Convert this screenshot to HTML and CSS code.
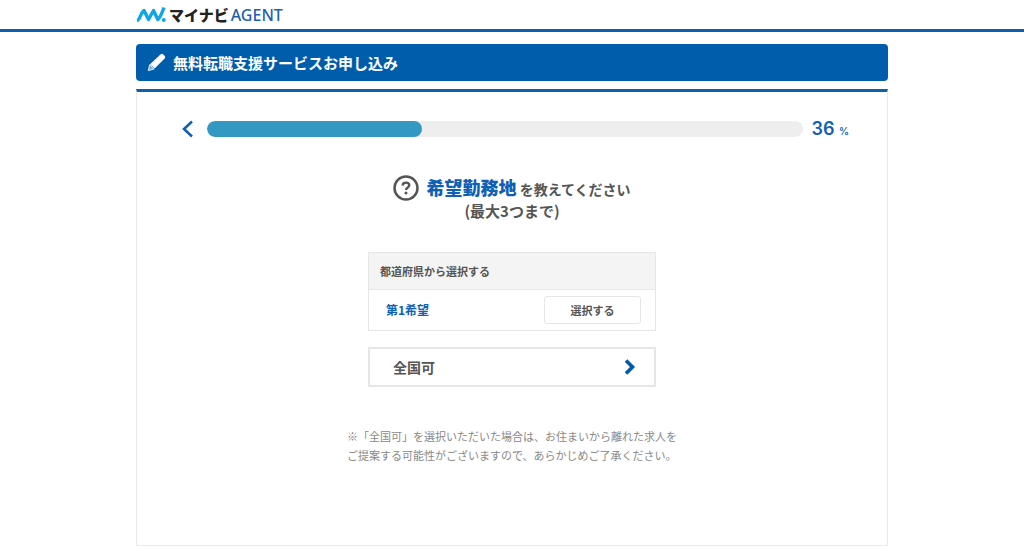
FILE: index.html
```html
<!DOCTYPE html>
<html lang="ja">
<head>
<meta charset="utf-8">
<meta name="viewport" content="width=device-width, initial-scale=1">
<title>無料転職支援サービスお申し込み</title>
<link rel="stylesheet" href="styles.css">
</head>
<body>
<header class="site-header">
  <div class="container">
    <a class="logo" href="#">
      <svg class="logo-mark" width="31" height="18" viewBox="0 0 31 18" aria-hidden="true">
        <path d="M1 14.500C4 14 5 6 8 4.500L12.500 13.500L17.500 4.500L21.800 13.500C24 12 26 7 28 1.500" fill="none" stroke="#0fa6e9" stroke-width="3.400" stroke-linejoin="round"/>
        <circle cx="27.800" cy="14" r="2" fill="#0fa6e9"/>
      </svg>
      <span class="logo-name">マイナビ</span>
      <span class="logo-sub">AGENT</span>
    </a>
  </div>
</header>
<main class="container">
  <h1 class="page-title">
    <svg width="19" height="19" viewBox="0 0 19 19" aria-hidden="true">
      <path d="M13.500 1.400Q14.800 .2 16 1.200L17.800 3Q18.700 4.200 17.600 5.400L7.600 15.600L3 11.200Z" fill="#fff"/>
      <path d="M2.700 11.700L1.300 17.600L7.100 16Z" fill="#7fadd5" stroke="#e6eff8" stroke-width="1" stroke-linejoin="round"/>
    </svg>
    <span>無料転職支援サービスお申し込み</span>
  </h1>
  <section class="panel">
    <div class="progress">
      <button class="back" type="button" aria-label="戻る">
        <svg width="12" height="18" viewBox="0 0 12 18" aria-hidden="true"><path d="M10 1.500L2 9L10 16.500" fill="none" stroke="#0d60b5" stroke-width="2.500"/></svg>
      </button>
      <div class="track" role="progressbar" aria-label="進捗" aria-valuenow="36" aria-valuemin="0" aria-valuemax="100"><div class="fill" style="width:36%"></div></div>
      <div class="percent">36 <small>%</small></div>
    </div>
    <h2 class="question">
      <span class="question-line">
        <svg width="26" height="26" viewBox="0 0 26 26" aria-hidden="true">
          <circle cx="13" cy="13" r="11.500" fill="none" stroke="#555" stroke-width="2.500"/>
          <path d="M9.700 10.500C9.700 6.700 16.300 6.700 16.300 10.300C16.300 12.500 13 12.400 13 15" fill="none" stroke="#555" stroke-width="2.400"/>
          <circle cx="13" cy="17.900" r="1.500" fill="#555"/>
        </svg>
        <span class="question-text"><strong>希望勤務地</strong> を教えてください</span>
      </span>
      <span class="question-note">(最大3つまで)</span>
    </h2>
    <div class="choices">
      <div class="card">
        <h3 class="card-head">都道府県から選択する</h3>
        <div class="card-row">
          <span class="rank" id="rank1">第1希望</span>
          <button class="select-btn" type="button" aria-describedby="rank1">選択する</button>
        </div>
      </div>
      <button class="anywhere" type="button">
        <span>全国可</span>
        <svg width="12" height="16" viewBox="0 0 12 16" aria-hidden="true"><path d="M2 1.500L8.500 8L2 14.500" fill="none" stroke="#005bac" stroke-width="3.600"/></svg>
      </button>
    </div>
    <p class="notice">※「全国可」を選択いただいた場合は、お住まいから離れた求人を<br>ご提案する可能性がございますので、あらかじめご了承ください。</p>
  </section>
</main>
</body>
</html>
```
FILE: styles.css
```css
* { box-sizing: border-box; }
body {
  margin: 0;
  background: #fff;
  color: #555;
  font-family: "Noto Sans CJK JP", sans-serif;
}
h1, h2, h3, p { margin: 0; }
button { font-family: inherit; color: inherit; cursor: pointer; }
svg { display: block; flex: none; }
.container { width: 100%; max-width: 752px; margin: 0 auto; }
.site-header { border-bottom: 3px solid #0d60ad; padding: 4px 0; }
.logo {
  display: flex;
  width: fit-content;
  align-items: center;
  gap: 2px;
  height: 21px;
  text-decoration: none;
  white-space: nowrap;
}
.logo-name { font: 900 15px/20px "Noto Sans CJK JP", sans-serif; color: #222; }
.logo-sub { font: 500 16px/20px "Noto Sans", sans-serif; color: #1d5fb0; }
.page-title {
  display: flex;
  align-items: center;
  gap: 7px;
  margin-top: 12px;
  padding: 8px 11px;
  border-radius: 4px;
  background: #005dac;
  color: #fff;
  font-size: 15px;
  line-height: 21px;
}
.panel {
  min-height: 457px;
  margin: 8px 0 4px;
  padding: 25px 38px;
  border: 1px solid #e9e9e9;
  border-top: 3px solid #0d60ad;
}
.progress { display: flex; align-items: center; gap: 8px; }
.back { padding: 0 5px 0 7px; border: 0; background: none; }
.track { flex: 1; height: 16px; border-radius: 8px; background: #eee; overflow: hidden; }
.fill { height: 100%; border-radius: 8px; background: #3499c2; }
.percent { padding: 2px 0; color: #0d60b5; font: 600 18px/20px Inter, sans-serif; white-space: nowrap; }
.percent small { font-size: 10px; line-height: 1; }
.question { margin-top: 34px; text-align: center; font-size: 14px; line-height: 24px; }
.question-line { display: flex; align-items: center; justify-content: center; gap: 7px; }
.question-text strong { color: #0d60b5; font-size: 18px; }
.question-note { display: block; font-size: 15px; line-height: 20px; }
.choices { width: 288px; margin: 31px auto 0; }
.card { border: 1px solid #e6e6e6; }
.card-head {
  padding: 8px 11px;
  border-bottom: 1px solid #e6e6e6;
  background: #f4f4f4;
  font-size: 11px;
  line-height: 20px;
}
.card-row { display: flex; align-items: center; justify-content: space-between; padding: 6px 14px 6px 17px; }
.rank { color: #0d60b5; font-size: 12px; line-height: 16px; font-weight: 700; }
.select-btn {
  width: 97px;
  padding: 3px 0;
  border: 1px solid #e6e6e6;
  border-radius: 3px;
  background: #fff;
  font-size: 11px;
  font-weight: 700;
  line-height: 20px;
}
.anywhere {
  display: flex;
  align-items: center;
  justify-content: space-between;
  width: 100%;
  margin-top: 16px;
  padding: 8px 18px 8px 23px;
  border: 2px solid #e6e6e6;
  background: #fff;
  font-size: 14px;
  font-weight: 700;
  line-height: 20px;
}
.notice {
  width: fit-content;
  margin: 40px auto 0;
  color: #888;
  font-size: 11px;
  line-height: 19px;
}
```
